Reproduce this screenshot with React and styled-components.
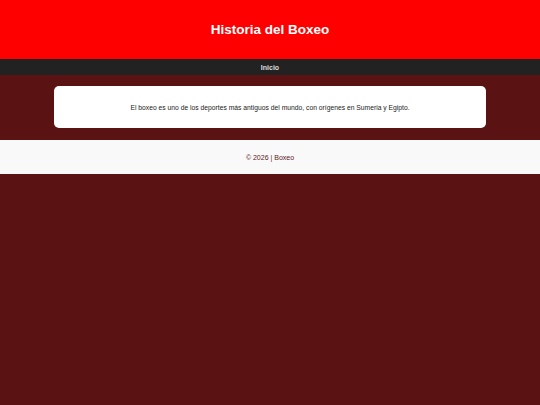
import React from "react";
import styled, { createGlobalStyle } from "styled-components";

const Global = createGlobalStyle`
  html, body { margin: 0; padding: 0; background: #5b1212; }
  body { font-family: "Liberation Sans", Arial, sans-serif; }
`;

const Header = styled.header`
  background: #ff0000;
  height: 59px;
  display: flex;
  align-items: center;
  justify-content: center;
`;

const Title = styled.h1`
  margin: 0;
  color: #fff;
  font-size: 13.5px;
  font-weight: bold;
`;

const Nav = styled.nav`
  background: #222;
  height: 16px;
  display: flex;
  align-items: center;
  justify-content: center;
`;

const NavLink = styled.a`
  color: #ddd;
  font-size: 7px;
  font-weight: bold;
  text-decoration: none;
`;

const Main = styled.main`
  padding: 11px 0 12px;
  display: flex;
  justify-content: center;
`;

const Card = styled.section`
  width: 432px;
  height: 42px;
  background: #fff;
  border-radius: 5px;
  display: flex;
  align-items: center;
  justify-content: center;
`;

const Text = styled.p`
  margin: 0;
  font-size: 6.75px;
  color: #222;
`;

const Footer = styled.footer`
  background: #f9f9f9;
  height: 34px;
  display: flex;
  align-items: center;
  justify-content: center;
  color: #5b1a1a;
  font-size: 7px;
`;

export default function App() {
  return (
    <>
      <Global />
      <Header>
        <Title>Historia del Boxeo</Title>
      </Header>
      <Nav>
        <NavLink href="#">Inicio</NavLink>
      </Nav>
      <Main>
        <Card>
          <Text>
            El boxeo es uno de los deportes más antiguos del mundo, con orígenes en Sumeria y Egipto.
          </Text>
        </Card>
      </Main>
      <Footer>© 2026 | Boxeo</Footer>
    </>
  );
}
